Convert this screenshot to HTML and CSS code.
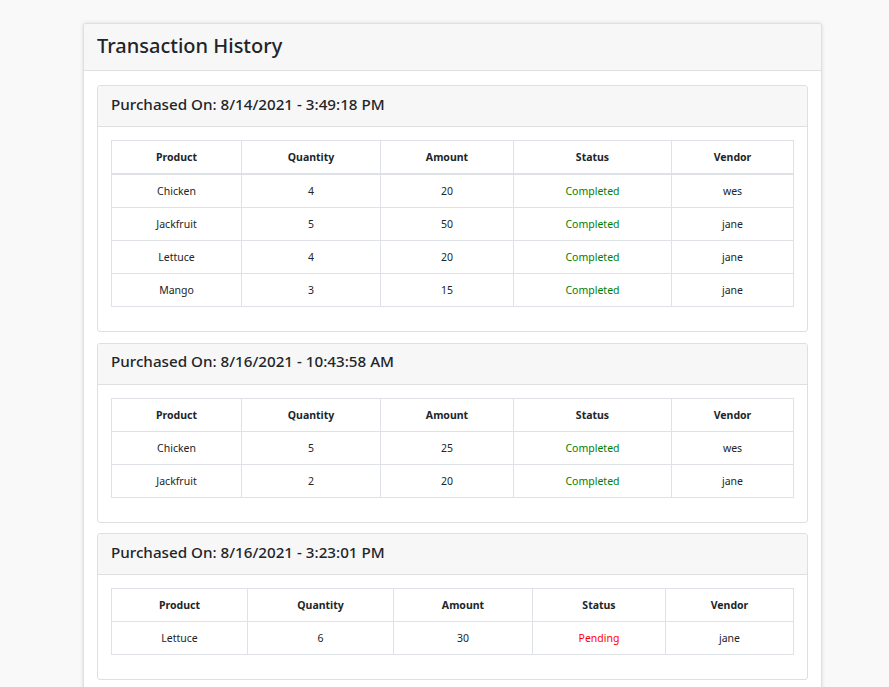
FILE: index.html
```html
<!DOCTYPE html>
<html lang="en">
<head>
<meta charset="utf-8">
<title>Transaction History</title>
<link rel="stylesheet" href="styles.css">
</head>
<body>
<div class="page">
  <div class="card outer">
    <div class="card-header outer-header"><h3 class="title">Transaction History</h3></div>
    <div class="outer-body">

      <div class="card order">
        <div class="card-header order-header"><h5 class="order-title">Purchased On: 8/14/2021 - 3:49:18 PM</h5></div>
        <div class="order-body">
          <table class="tbl tbl-a thick-head">
            <thead><tr><th>Product</th><th>Quantity</th><th>Amount</th><th>Status</th><th>Vendor</th></tr></thead>
            <tbody>
              <tr><td>Chicken</td><td>4</td><td>20</td><td class="ok">Completed</td><td>wes</td></tr>
              <tr><td>Jackfruit</td><td>5</td><td>50</td><td class="ok">Completed</td><td>jane</td></tr>
              <tr><td>Lettuce</td><td>4</td><td>20</td><td class="ok">Completed</td><td>jane</td></tr>
              <tr><td>Mango</td><td>3</td><td>15</td><td class="ok">Completed</td><td>jane</td></tr>
            </tbody>
          </table>
        </div>
      </div>

      <div class="card order">
        <div class="card-header order-header"><h5 class="order-title">Purchased On: 8/16/2021 - 10:43:58 AM</h5></div>
        <div class="order-body">
          <table class="tbl tbl-a">
            <thead><tr><th>Product</th><th>Quantity</th><th>Amount</th><th>Status</th><th>Vendor</th></tr></thead>
            <tbody>
              <tr><td>Chicken</td><td>5</td><td>25</td><td class="ok">Completed</td><td>wes</td></tr>
              <tr><td>Jackfruit</td><td>2</td><td>20</td><td class="ok">Completed</td><td>jane</td></tr>
            </tbody>
          </table>
        </div>
      </div>

      <div class="card order">
        <div class="card-header order-header"><h5 class="order-title">Purchased On: 8/16/2021 - 3:23:01 PM</h5></div>
        <div class="order-body">
          <table class="tbl tbl-b">
            <thead><tr><th>Product</th><th>Quantity</th><th>Amount</th><th>Status</th><th>Vendor</th></tr></thead>
            <tbody>
              <tr><td>Lettuce</td><td>6</td><td>30</td><td class="pending">Pending</td><td>jane</td></tr>
            </tbody>
          </table>
        </div>
      </div>

    </div>
  </div>
</div>
</body>
</html>
```

FILE: styles.css
```css
html, body {
  margin: 0;
  padding: 0;
  background: #f9f9f9;
  color: #212529;
  font-family: "Noto Sans", "Open Sans", Arial, sans-serif;
}

.page {
  padding: 23px 0 0 83px;
}

.card {
  background: #fff;
  border: 1px solid #dfdfdf;
  border-radius: 3px;
}

.outer {
  width: 737px;
  box-shadow: 0 0 4px rgba(0, 0, 0, 0.12);
}

.card-header {
  background: #f7f7f7;
  border-bottom: 1px solid #dfdfdf;
  display: flex;
  align-items: center;
  border-radius: 3px 3px 0 0;
  box-sizing: border-box;
}

.outer-header {
  height: 47px;
  padding: 0 13px 2px;
}

.title {
  margin: 0;
  font-size: 20px;
  font-weight: 500;
  line-height: 1;
}

.outer-body {
  padding: 14px 13px 6px;
}

.order {
  margin-bottom: 10.6px;
}

.order-header {
  height: 41px;
  padding: 0 13px 3px;
}

.order-title {
  margin: 0;
  font-size: 15.2px;
  font-weight: 500;
  line-height: 1;
}

.order-body {
  padding: 13px 13px 24px;
}

.tbl {
  width: 100%;
  border-collapse: collapse;
  table-layout: fixed;
  font-size: 10.5px;
}

.tbl th,
.tbl td {
  border: 1px solid #dee2e6;
  height: 32px;
  padding: 0;
  text-align: center;
  vertical-align: middle;
}

.tbl th {
  font-weight: 700;
}

.thick-head thead th {
  border-bottom: 2px solid #dee2e6;
}

.tbl-a th:nth-child(1) { width: 129px; }
.tbl-a th:nth-child(2) { width: 138px; }
.tbl-a th:nth-child(3) { width: 132px; }
.tbl-a th:nth-child(4) { width: 157px; }

.tbl-b th:nth-child(1) { width: 135px; }
.tbl-b th:nth-child(2) { width: 145px; }
.tbl-b th:nth-child(3) { width: 138px; }
.tbl-b th:nth-child(4) { width: 132px; }

.ok { color: #008000; }
.pending { color: #ff0000; }
```
